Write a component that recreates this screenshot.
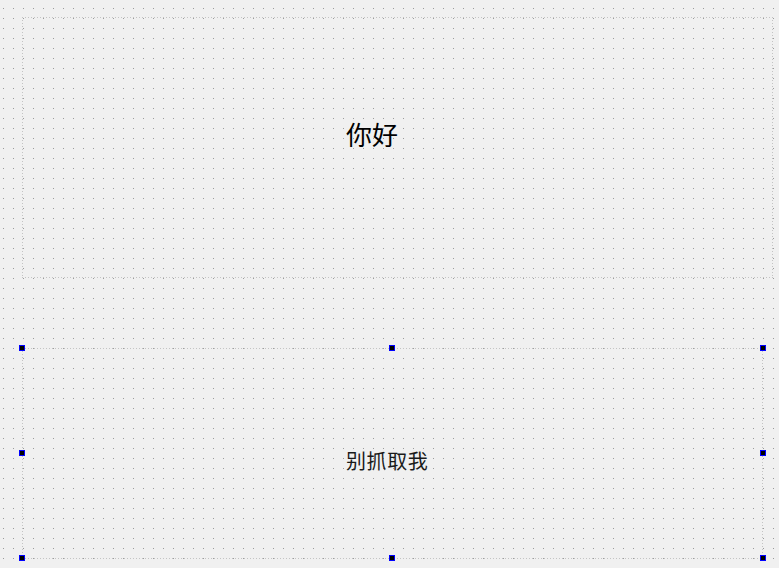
const HANDLE_X = [19, 389, 760];
const HANDLE_Y = [345, 450, 555];

function Handles() {
  const pts: [number, number][] = [];
  HANDLE_Y.forEach((y, j) =>
    HANDLE_X.forEach((x, i) => {
      if (j === 1 && i === 1) return;
      pts.push([x, y]);
    })
  );
  return (
    <>
      {pts.map(([x, y]) => (
        <g key={`${x}-${y}`}>
          <rect x={x} y={y} width={6} height={6} fill="#0000ff" />
          <rect x={x + 1} y={y + 1} width={4} height={4} fill="#000000" />
        </g>
      ))}
    </>
  );
}

export default function App() {
  return (
    <div className="relative w-[779px] h-[568px] overflow-hidden bg-[#f0f0f0] font-['Noto_Sans_CJK_SC','Noto_Sans',sans-serif] text-black">
      {/* form grid + widget frames */}
      <svg className="absolute inset-0" width={779} height={568} shapeRendering="crispEdges">
        <defs>
          <pattern id="grid" x={3} y={8} width={10} height={10} patternUnits="userSpaceOnUse">
            <rect width={1} height={1} fill="#9a9a9a" />
          </pattern>
        </defs>
        <rect width={779} height={568} fill="url(#grid)" />

        <g stroke="#c4c4c4" strokeWidth={1} strokeDasharray="1 2" fill="none">
          {/* label 1 */}
          <line x1={22} y1={17.5} x2={773} y2={17.5} />
          <line x1={22.5} y1={17} x2={22.5} y2={278} />
          <line x1={22} y1={277.5} x2={773} y2={277.5} />
          <line x1={772.5} y1={17} x2={772.5} y2={278} />
          {/* label 2 */}
          <line x1={22} y1={348.5} x2={763} y2={348.5} />
          <line x1={22.5} y1={348} x2={22.5} y2={559} />
          <line x1={22} y1={558.5} x2={763} y2={558.5} />
          <line x1={762.5} y1={348} x2={762.5} y2={559} />
        </g>

        <Handles />
      </svg>

      <div className="absolute left-[346px] top-[121px] text-[26px] leading-none whitespace-nowrap">
        你好
      </div>
      <div className="absolute left-[346px] top-[451px] text-[20px] leading-none tracking-[0.6px] whitespace-nowrap text-[#1a1a1a]">
        别抓取我
      </div>
    </div>
  );
}
